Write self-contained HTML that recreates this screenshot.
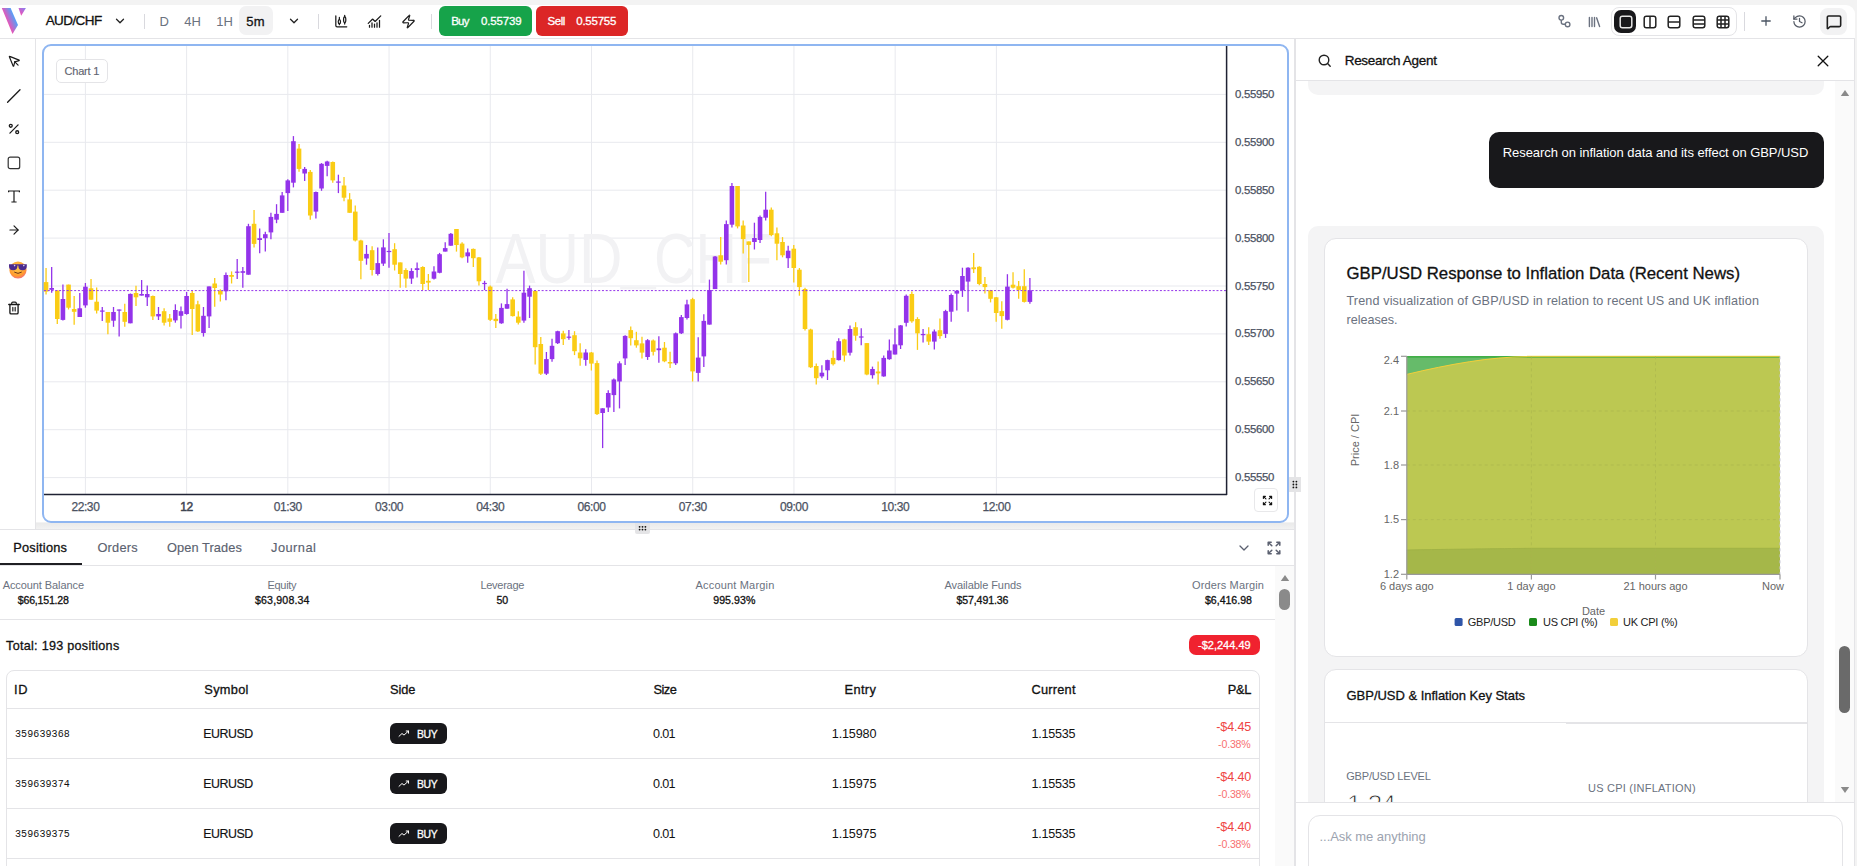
<!DOCTYPE html>
<html><head><meta charset="utf-8">
<style>
*{box-sizing:border-box;margin:0;padding:0}
html,body{width:1857px;height:866px;overflow:hidden;background:#f3f3f3;font-family:"Liberation Sans",sans-serif;color:#111}
.abs{position:absolute}
#tb{position:absolute;left:0;top:5px;width:1855px;height:34px;background:#fff;border-bottom:1px solid #e4e4e7;border-top-right-radius:9px}
.t{position:absolute;white-space:nowrap;line-height:1}
.sb{-webkit-text-stroke:0.3px currentColor}
.sb2{-webkit-text-stroke:0.15px currentColor}
.lt{-webkit-text-stroke:0.9px #fff}
.sep{position:absolute;width:1px;background:#d9d9de}
svg{position:absolute;overflow:visible}
.pl{font-family:"Liberation Sans",sans-serif;font-size:11.4px;fill:#4b5262;stroke:#4b5262;stroke-width:0.25px;letter-spacing:-0.3px}
.tl{font-family:"Liberation Sans",sans-serif;font-size:12px;fill:#4b5262;stroke:#4b5262;stroke-width:0.25px;letter-spacing:-0.4px}
.tl.b{stroke-width:0.5px;fill:#3f4552;stroke:#3f4552}
#side{position:absolute;left:0;top:39px;width:36px;height:490px;background:#fff;border-right:1px solid #e4e4e7}
#main{position:absolute;left:36px;top:39px;width:1259px;height:483px;background:#fff}
#frame{position:absolute;left:42px;top:44px;width:1247px;height:479px;border:2px solid #8fb6f1;border-radius:9px;background:#fff}
#band{position:absolute;left:36px;top:523px;width:1259px;height:6px;background:linear-gradient(#eaeaea,#f2f2f2)}
#bottom{position:absolute;left:0;top:529px;width:1295px;height:337px;background:#fff;border-top:1px solid #e4e4e7}
#right{position:absolute;left:1294px;top:39px;width:561px;height:827px;background:#fff;border-left:2px solid #e4e4e7;border-right:1px solid #e4e4e7}
</style></head><body>

<div id="tb"></div>
<div id="side"></div>
<div id="main"></div>
<div id="frame"></div>
<div id="band"></div>
<div id="bottom"></div>
<div id="right"></div>

<!-- toolbar -->
<svg width="26" height="30" style="left:0;top:4px" viewBox="0 4 26 30">
<defs>
<linearGradient id="lg1" gradientUnits="userSpaceOnUse" x1="7" y1="22.5" x2="15" y2="19"><stop offset="0" stop-color="#f44fb2"/><stop offset="1" stop-color="#5a9ef6"/></linearGradient>
<linearGradient id="lg2" gradientUnits="userSpaceOnUse" x1="20" y1="14" x2="25" y2="8"><stop offset="0" stop-color="#ee4fb8"/><stop offset="1" stop-color="#8a80f0"/></linearGradient>
</defs>
<polygon points="1.8,8 10.6,8 18,25 12.5,34" fill="url(#lg1)"/>
<polygon points="18.5,8 25.9,8 21.2,15.7" fill="url(#lg2)"/>
</svg>
<svg width="14" height="14" style="left:113px;top:14px" viewBox="0 0 24 24" fill="none" stroke="#222" stroke-width="2.2" stroke-linecap="round" stroke-linejoin="round"><path d="m6 9 6 6 6-6"/></svg>
<div class="sep" style="left:144px;top:14px;height:15px"></div>
<div class="abs" style="left:239px;top:6px;width:34px;height:29px;background:#f2f2f3;border-radius:7px"></div>
<svg width="14" height="14" style="left:287px;top:14px" viewBox="0 0 24 24" fill="none" stroke="#222" stroke-width="2.2" stroke-linecap="round" stroke-linejoin="round"><path d="m6 9 6 6 6-6"/></svg>
<div class="sep" style="left:318px;top:14px;height:15px"></div>
<svg width="15" height="15" style="left:333px;top:14px" viewBox="0 0 24 24" fill="none" stroke="#1a1a1a" stroke-width="2" stroke-linecap="round" stroke-linejoin="round"><path d="M4.5 3v15.5a2 2 0 0 0 2 2H22"/><path d="M10.2 5.4v3.4M10.2 15.6v1.4M18.7 2.1v2.4M18.7 13.8v2.2"/><ellipse cx="10.2" cy="12.2" rx="1.8" ry="3.3"/><ellipse cx="18.7" cy="9.1" rx="1.8" ry="4.5"/></svg>
<svg width="15" height="15" style="left:367px;top:14px" viewBox="0 0 24 24" fill="none" stroke="#1a1a1a" stroke-width="2" stroke-linecap="round" stroke-linejoin="round"><path d="M12 16v5M16 14v7M20 10v11M4 18v3M8 14v7"/><path d="m22 3-8.646 8.646a.5.5 0 0 1-.708 0L9.354 8.354a.5.5 0 0 0-.707 0L2 15"/></svg>
<svg width="15" height="15" style="left:401px;top:14px" viewBox="0 0 24 24" fill="none" stroke="#1a1a1a" stroke-width="2" stroke-linecap="round" stroke-linejoin="round"><path d="M4 14a1 1 0 0 1-.78-1.63l9.9-10.2a.5.5 0 0 1 .86.46l-1.92 6.02A1 1 0 0 0 13 10h7a1 1 0 0 1 .78 1.63l-9.9 10.2a.5.5 0 0 1-.86-.46l1.92-6.02A1 1 0 0 0 11 14z"/></svg>
<div class="sep" style="left:431px;top:14px;height:15px"></div>
<div class="abs" style="left:439px;top:6px;width:93px;height:30px;background:#16a34a;border-radius:6px"></div>
<div class="abs" style="left:536px;top:6px;width:92px;height:30px;background:#dc2626;border-radius:6px"></div>

<!-- right toolbar -->
<svg width="14" height="14" style="left:1557px;top:14px" viewBox="0 0 14 14" fill="none" stroke="#6b7280" stroke-width="1.4"><circle cx="4.3" cy="3.8" r="2.3"/><circle cx="10.6" cy="10.4" r="2.3"/><path d="M4.3 6.1v2.2a2 2 0 0 0 2 2h2"/></svg>
<svg width="14" height="14" style="left:1587px;top:14px" viewBox="0 0 14 14" fill="none" stroke="#6b7280" stroke-width="1.4" stroke-linecap="round"><path d="M2.4 3.5v9M5 3.5v9M7.5 3.5v9M9.6 3.8l3 8.7"/></svg>
<div class="abs" style="left:1611px;top:7px;width:126px;height:29px;border:1px solid #e4e4e7;border-radius:8px"></div>
<div class="abs" style="left:1614px;top:10px;width:22px;height:23px;background:#18181b;border-radius:7px"></div>
<svg width="14" height="14" style="left:1618.5px;top:14.5px" viewBox="0 0 14 14" fill="none" stroke="#e5e5e5" stroke-width="1.5"><rect x="1.2" y="1.2" width="11.6" height="11.6" rx="2.2"/></svg>
<svg width="14" height="14" style="left:1642.5px;top:14.5px" viewBox="0 0 14 14" fill="none" stroke="#222" stroke-width="1.5"><rect x="1.2" y="1.2" width="11.6" height="11.6" rx="2.2"/><path d="M7 1.2v11.6"/></svg>
<svg width="14" height="14" style="left:1666.5px;top:14.5px" viewBox="0 0 14 14" fill="none" stroke="#222" stroke-width="1.5"><rect x="1.2" y="1.2" width="11.6" height="11.6" rx="2.2"/><path d="M1.2 7h11.6"/></svg>
<svg width="14" height="14" style="left:1691.5px;top:14.5px" viewBox="0 0 14 14" fill="none" stroke="#222" stroke-width="1.5"><rect x="1.2" y="1.2" width="11.6" height="11.6" rx="2.2"/><path d="M1.2 5h11.6M1.2 9h11.6"/></svg>
<svg width="14" height="14" style="left:1715.5px;top:14.5px" viewBox="0 0 14 14" fill="none" stroke="#222" stroke-width="1.5"><rect x="1.2" y="1.2" width="11.6" height="11.6" rx="2.2"/><path d="M1.2 5h11.6M1.2 9h11.6M5 1.2v11.6M9 1.2v11.6"/></svg>
<div class="sep" style="left:1744px;top:12px;height:19px"></div>
<svg width="12" height="12" style="left:1759.5px;top:15.3px" viewBox="0 0 12 12" fill="none" stroke="#4b5563" stroke-width="1.3"><path d="M6 1.3v9.4M1.3 6h9.4"/></svg>
<svg width="15" height="15" style="left:1791.5px;top:13.8px" viewBox="0 0 24 24" fill="none" stroke="#555b66" stroke-width="2" stroke-linecap="round" stroke-linejoin="round"><path d="M3 12a9 9 0 1 0 9-9 9.75 9.75 0 0 0-6.74 2.74L3 8"/><path d="M3 3v5h5"/><path d="M12 7v5l4 2"/></svg>
<div class="abs" style="left:1820px;top:8px;width:27px;height:27px;background:#f2f2f3;border-radius:8px"></div>
<svg width="16" height="16" style="left:1825.5px;top:13.5px" viewBox="0 0 24 24" fill="none" stroke="#1f1f1f" stroke-width="2.4" stroke-linecap="round" stroke-linejoin="round"><path d="M22 17a2 2 0 0 1-2 2H6.828a2 2 0 0 0-1.414.586l-2.202 2.202A.71.71 0 0 1 2 21.286V5a2 2 0 0 1 2-2h16a2 2 0 0 1 2 2z"/></svg>

<!-- left tools -->
<svg width="14" height="14" style="left:7px;top:54px" viewBox="0 0 24 24" fill="none" stroke="#1a1a1a" stroke-width="2" stroke-linecap="round" stroke-linejoin="round"><path d="M4.037 4.688a.495.495 0 0 1 .651-.651l16 6.5a.5.5 0 0 1-.063.947l-6.124 1.58a2 2 0 0 0-1.438 1.435l-1.579 6.126a.5.5 0 0 1-.947.063z"/><path d="m13 13 6 6"/></svg>
<svg width="14" height="14" style="left:7px;top:88.5px" viewBox="0 0 14 14" fill="none" stroke="#1a1a1a" stroke-width="1.3" stroke-linecap="round"><path d="M0.6 13.2 13 0.8"/></svg>
<svg width="14" height="14" style="left:6.5px;top:121.5px" viewBox="0 0 24 24" fill="none" stroke="#1a1a1a" stroke-width="2.2" stroke-linecap="round" stroke-linejoin="round"><path d="M19 5 5 19"/><circle cx="6.5" cy="6.5" r="2.5"/><circle cx="17.5" cy="17.5" r="2.5"/></svg>
<svg width="14" height="14" style="left:6.5px;top:155.5px" viewBox="0 0 14 14" fill="none" stroke="#333" stroke-width="1.2"><rect x="1.2" y="1.2" width="11.5" height="11.5" rx="2"/></svg>
<svg width="14" height="14" style="left:6.5px;top:189px" viewBox="0 0 14 14" fill="none" stroke="#1a1a1a" stroke-width="1.2" stroke-linecap="square"><path d="M1.6 2.6V2h10.8v0.6M7 2v11M5 13h4"/></svg>
<svg width="14" height="14" style="left:6.5px;top:223px" viewBox="0 0 24 24" fill="none" stroke="#1a1a1a" stroke-width="2" stroke-linecap="round" stroke-linejoin="round"><path d="M5 12h14"/><path d="m12 5 7 7-7 7"/></svg>
<svg width="20" height="18" style="left:8px;top:261px" viewBox="0 0 20 18">
<defs><radialGradient id="emg" cx="0.45" cy="0.35" r="0.7"><stop offset="0" stop-color="#ffcf4a"/><stop offset="0.7" stop-color="#ff9a2e"/><stop offset="1" stop-color="#f0648a"/></radialGradient></defs>
<circle cx="10" cy="9" r="8.6" fill="url(#emg)"/>
<path d="M1 3.2H9.4V5.3C9.4 7.9 7.9 9.3 5.2 9.3S1 7.9 1 5.3Z M10.4 3.2H18.8V5.3C18.8 7.9 17.3 9.3 14.6 9.3S10.4 7.9 10.4 5.3Z M9 3.2h1.8v1.3H9z" fill="#4b2a8f"/><circle cx="6.6" cy="4.6" r="0.8" fill="#fff" opacity="0.8"/><circle cx="15.8" cy="4.6" r="0.8" fill="#fff" opacity="0.8"/>
<path d="M6.6 11.3q3.4 2.4 6.8 0" stroke="#6b3a1a" stroke-width="1" fill="none" stroke-linecap="round"/>
</svg>
<svg width="14" height="14" style="left:6.5px;top:301px" viewBox="0 0 24 24" fill="none" stroke="#1a1a1a" stroke-width="2" stroke-linecap="round" stroke-linejoin="round"><path d="M3 6h18" stroke-width="2.3"/><path d="M19 6v14c0 1-1 2-2 2H7c-1 0-2-1-2-2V6" stroke-width="2.3"/><path d="M8 6V4c0-1 1-2 2-2h4c1 0 2 1 2 2v2"/><path d="M10 11v6M14 11v6"/></svg>

<!-- main chart svg -->
<svg width="1857" height="866" style="left:0;top:0" viewBox="0 0 1857 866">
<line x1="85.40" y1="46" x2="85.40" y2="494" stroke="#e8e9ee" stroke-width="1"/>
<line x1="186.62" y1="46" x2="186.62" y2="494" stroke="#e8e9ee" stroke-width="1"/>
<line x1="287.84" y1="46" x2="287.84" y2="494" stroke="#e8e9ee" stroke-width="1"/>
<line x1="389.06" y1="46" x2="389.06" y2="494" stroke="#e8e9ee" stroke-width="1"/>
<line x1="490.28" y1="46" x2="490.28" y2="494" stroke="#e8e9ee" stroke-width="1"/>
<line x1="591.50" y1="46" x2="591.50" y2="494" stroke="#e8e9ee" stroke-width="1"/>
<line x1="692.72" y1="46" x2="692.72" y2="494" stroke="#e8e9ee" stroke-width="1"/>
<line x1="793.94" y1="46" x2="793.94" y2="494" stroke="#e8e9ee" stroke-width="1"/>
<line x1="895.16" y1="46" x2="895.16" y2="494" stroke="#e8e9ee" stroke-width="1"/>
<line x1="996.38" y1="46" x2="996.38" y2="494" stroke="#e8e9ee" stroke-width="1"/>
<line x1="44" y1="94.40" x2="1226" y2="94.40" stroke="#e8e9ee" stroke-width="1"/>
<line x1="44" y1="142.30" x2="1226" y2="142.30" stroke="#e8e9ee" stroke-width="1"/>
<line x1="44" y1="190.20" x2="1226" y2="190.20" stroke="#e8e9ee" stroke-width="1"/>
<line x1="44" y1="238.10" x2="1226" y2="238.10" stroke="#e8e9ee" stroke-width="1"/>
<line x1="44" y1="286.00" x2="1226" y2="286.00" stroke="#e8e9ee" stroke-width="1"/>
<line x1="44" y1="333.90" x2="1226" y2="333.90" stroke="#e8e9ee" stroke-width="1"/>
<line x1="44" y1="381.80" x2="1226" y2="381.80" stroke="#e8e9ee" stroke-width="1"/>
<line x1="44" y1="429.70" x2="1226" y2="429.70" stroke="#e8e9ee" stroke-width="1"/>
<line x1="44" y1="477.60" x2="1226" y2="477.60" stroke="#e8e9ee" stroke-width="1"/>
<g fill="#f2f2f4" font-family="Liberation Sans" font-size="70.5"><text x="495.5" y="283.4" textLength="127" lengthAdjust="spacingAndGlyphs">AUD</text><text x="654" y="283.4" textLength="118" lengthAdjust="spacingAndGlyphs">CHF</text><rect x="620.2" y="286.8" width="36" height="2.5"/></g>
<line x1="46.05" y1="267.9" x2="46.05" y2="294.5" stroke="#facc15" stroke-width="1.3"/>
<rect x="43.75" y="282.1" width="4.6" height="9.50" fill="#facc15"/>
<line x1="51.67" y1="267" x2="51.67" y2="292.7" stroke="#9333ea" stroke-width="1.3"/>
<rect x="49.37" y="288" width="4.6" height="1.80" fill="#9333ea"/>
<line x1="57.29" y1="290.4" x2="57.29" y2="324" stroke="#facc15" stroke-width="1.3"/>
<rect x="54.99" y="290.4" width="4.6" height="28.60" fill="#facc15"/>
<line x1="62.92" y1="284.6" x2="62.92" y2="320.4" stroke="#9333ea" stroke-width="1.3"/>
<rect x="60.62" y="299" width="4.6" height="20.90" fill="#9333ea"/>
<line x1="68.54" y1="284.6" x2="68.54" y2="309.5" stroke="#facc15" stroke-width="1.3"/>
<rect x="66.24" y="284.6" width="4.6" height="23.10" fill="#facc15"/>
<line x1="74.16" y1="296" x2="74.16" y2="324.8" stroke="#facc15" stroke-width="1.3"/>
<rect x="71.86" y="309" width="4.6" height="2.80" fill="#facc15"/>
<line x1="79.78" y1="293" x2="79.78" y2="317" stroke="#9333ea" stroke-width="1.3"/>
<rect x="77.48" y="308.3" width="4.6" height="8.70" fill="#9333ea"/>
<line x1="85.40" y1="283" x2="85.40" y2="307.7" stroke="#9333ea" stroke-width="1.3"/>
<rect x="83.10" y="286.7" width="4.6" height="18.70" fill="#9333ea"/>
<line x1="91.03" y1="279" x2="91.03" y2="299.7" stroke="#facc15" stroke-width="1.3"/>
<rect x="88.73" y="288.3" width="4.6" height="11.40" fill="#facc15"/>
<line x1="96.65" y1="287.5" x2="96.65" y2="313.5" stroke="#facc15" stroke-width="1.3"/>
<rect x="94.35" y="301.7" width="4.6" height="8.90" fill="#facc15"/>
<line x1="102.27" y1="307" x2="102.27" y2="321" stroke="#9333ea" stroke-width="1.3"/>
<rect x="99.97" y="310.5" width="4.6" height="1.20" fill="#9333ea"/>
<line x1="107.89" y1="312" x2="107.89" y2="334.3" stroke="#facc15" stroke-width="1.3"/>
<rect x="105.59" y="312" width="4.6" height="10.70" fill="#facc15"/>
<line x1="113.51" y1="307" x2="113.51" y2="326.8" stroke="#9333ea" stroke-width="1.3"/>
<rect x="111.21" y="312" width="4.6" height="8.70" fill="#9333ea"/>
<line x1="119.14" y1="309.5" x2="119.14" y2="336.6" stroke="#9333ea" stroke-width="1.3"/>
<rect x="116.84" y="309.5" width="4.6" height="1.20" fill="#9333ea"/>
<line x1="124.76" y1="303.7" x2="124.76" y2="326.8" stroke="#facc15" stroke-width="1.3"/>
<rect x="122.46" y="312" width="4.6" height="9.80" fill="#facc15"/>
<line x1="130.38" y1="293.5" x2="130.38" y2="323.3" stroke="#9333ea" stroke-width="1.3"/>
<rect x="128.08" y="293.9" width="4.6" height="29.40" fill="#9333ea"/>
<line x1="136.00" y1="285.8" x2="136.00" y2="306" stroke="#facc15" stroke-width="1.3"/>
<rect x="133.70" y="293" width="4.6" height="4.30" fill="#facc15"/>
<line x1="141.62" y1="280" x2="141.62" y2="295.6" stroke="#9333ea" stroke-width="1.3"/>
<rect x="139.32" y="294" width="4.6" height="1.60" fill="#9333ea"/>
<line x1="147.25" y1="285.6" x2="147.25" y2="306" stroke="#9333ea" stroke-width="1.3"/>
<rect x="144.95" y="294" width="4.6" height="3.30" fill="#9333ea"/>
<line x1="152.87" y1="295.6" x2="152.87" y2="319.9" stroke="#facc15" stroke-width="1.3"/>
<rect x="150.57" y="296" width="4.6" height="20.40" fill="#facc15"/>
<line x1="158.49" y1="307" x2="158.49" y2="320" stroke="#9333ea" stroke-width="1.3"/>
<rect x="156.19" y="314" width="4.6" height="2.40" fill="#9333ea"/>
<line x1="164.11" y1="308.3" x2="164.11" y2="325.6" stroke="#facc15" stroke-width="1.3"/>
<rect x="161.81" y="311.2" width="4.6" height="11.50" fill="#facc15"/>
<line x1="169.73" y1="314" x2="169.73" y2="326.8" stroke="#facc15" stroke-width="1.3"/>
<rect x="167.43" y="318.4" width="4.6" height="3.40" fill="#facc15"/>
<line x1="175.36" y1="304.3" x2="175.36" y2="322.7" stroke="#9333ea" stroke-width="1.3"/>
<rect x="173.06" y="310" width="4.6" height="10.40" fill="#9333ea"/>
<line x1="180.98" y1="306.4" x2="180.98" y2="328.5" stroke="#9333ea" stroke-width="1.3"/>
<rect x="178.68" y="311.2" width="4.6" height="4.60" fill="#9333ea"/>
<line x1="186.60" y1="292" x2="186.60" y2="314.7" stroke="#9333ea" stroke-width="1.3"/>
<rect x="184.30" y="296" width="4.6" height="18.00" fill="#9333ea"/>
<line x1="192.22" y1="291" x2="192.22" y2="334.9" stroke="#facc15" stroke-width="1.3"/>
<rect x="189.92" y="293" width="4.6" height="16.00" fill="#facc15"/>
<line x1="197.84" y1="300.8" x2="197.84" y2="332" stroke="#facc15" stroke-width="1.3"/>
<rect x="195.54" y="304.3" width="4.6" height="27.10" fill="#facc15"/>
<line x1="203.47" y1="307" x2="203.47" y2="336.6" stroke="#9333ea" stroke-width="1.3"/>
<rect x="201.17" y="315.8" width="4.6" height="17.20" fill="#9333ea"/>
<line x1="209.09" y1="286.4" x2="209.09" y2="328" stroke="#9333ea" stroke-width="1.3"/>
<rect x="206.79" y="286.4" width="4.6" height="30.00" fill="#9333ea"/>
<line x1="214.71" y1="278" x2="214.71" y2="306.8" stroke="#facc15" stroke-width="1.3"/>
<rect x="212.41" y="283.5" width="4.6" height="4.50" fill="#facc15"/>
<line x1="220.33" y1="289.3" x2="220.33" y2="301.4" stroke="#facc15" stroke-width="1.3"/>
<rect x="218.03" y="291" width="4.6" height="3.50" fill="#facc15"/>
<line x1="225.95" y1="272.5" x2="225.95" y2="300.2" stroke="#9333ea" stroke-width="1.3"/>
<rect x="223.65" y="275" width="4.6" height="16.30" fill="#9333ea"/>
<line x1="231.58" y1="271.4" x2="231.58" y2="283.5" stroke="#facc15" stroke-width="1.3"/>
<rect x="229.28" y="275" width="4.6" height="1.80" fill="#facc15"/>
<line x1="237.20" y1="259" x2="237.20" y2="278.9" stroke="#9333ea" stroke-width="1.3"/>
<rect x="234.90" y="271.6" width="4.6" height="1.20" fill="#9333ea"/>
<line x1="242.82" y1="267" x2="242.82" y2="287.8" stroke="#9333ea" stroke-width="1.3"/>
<rect x="240.52" y="271.2" width="4.6" height="1.60" fill="#9333ea"/>
<line x1="248.44" y1="223.8" x2="248.44" y2="274.7" stroke="#9333ea" stroke-width="1.3"/>
<rect x="246.14" y="226.2" width="4.6" height="48.50" fill="#9333ea"/>
<line x1="254.06" y1="210" x2="254.06" y2="247.4" stroke="#facc15" stroke-width="1.3"/>
<rect x="251.76" y="223.8" width="4.6" height="20.10" fill="#facc15"/>
<line x1="259.69" y1="228.5" x2="259.69" y2="253.2" stroke="#9333ea" stroke-width="1.3"/>
<rect x="257.39" y="238.2" width="4.6" height="1.80" fill="#9333ea"/>
<line x1="265.31" y1="231.7" x2="265.31" y2="251.6" stroke="#9333ea" stroke-width="1.3"/>
<rect x="263.01" y="234.2" width="4.6" height="4.00" fill="#9333ea"/>
<line x1="270.93" y1="212.8" x2="270.93" y2="239.3" stroke="#9333ea" stroke-width="1.3"/>
<rect x="268.63" y="216.9" width="4.6" height="15.50" fill="#9333ea"/>
<line x1="276.55" y1="204.2" x2="276.55" y2="223.2" stroke="#9333ea" stroke-width="1.3"/>
<rect x="274.25" y="213.9" width="4.6" height="5.80" fill="#9333ea"/>
<line x1="282.17" y1="192" x2="282.17" y2="212.8" stroke="#9333ea" stroke-width="1.3"/>
<rect x="279.87" y="195.4" width="4.6" height="17.40" fill="#9333ea"/>
<line x1="287.80" y1="179.3" x2="287.80" y2="210.9" stroke="#9333ea" stroke-width="1.3"/>
<rect x="285.50" y="180.4" width="4.6" height="12.70" fill="#9333ea"/>
<line x1="293.42" y1="136.1" x2="293.42" y2="187.4" stroke="#9333ea" stroke-width="1.3"/>
<rect x="291.12" y="141.2" width="4.6" height="41.50" fill="#9333ea"/>
<line x1="299.04" y1="143.9" x2="299.04" y2="171.7" stroke="#facc15" stroke-width="1.3"/>
<rect x="296.74" y="148.6" width="4.6" height="20.30" fill="#facc15"/>
<line x1="304.66" y1="167" x2="304.66" y2="180.9" stroke="#9333ea" stroke-width="1.3"/>
<rect x="302.36" y="168.9" width="4.6" height="4.60" fill="#9333ea"/>
<line x1="310.28" y1="170" x2="310.28" y2="219.7" stroke="#facc15" stroke-width="1.3"/>
<rect x="307.98" y="171.9" width="4.6" height="43.60" fill="#facc15"/>
<line x1="315.91" y1="191.5" x2="315.91" y2="218.5" stroke="#9333ea" stroke-width="1.3"/>
<rect x="313.61" y="192" width="4.6" height="19.60" fill="#9333ea"/>
<line x1="321.53" y1="163.1" x2="321.53" y2="190.8" stroke="#9333ea" stroke-width="1.3"/>
<rect x="319.23" y="163.8" width="4.6" height="24.70" fill="#9333ea"/>
<line x1="327.15" y1="160.8" x2="327.15" y2="176.3" stroke="#9333ea" stroke-width="1.3"/>
<rect x="324.85" y="161.5" width="4.6" height="4.40" fill="#9333ea"/>
<line x1="332.77" y1="161.5" x2="332.77" y2="182.7" stroke="#facc15" stroke-width="1.3"/>
<rect x="330.47" y="162" width="4.6" height="18.40" fill="#facc15"/>
<line x1="338.39" y1="174.7" x2="338.39" y2="193.1" stroke="#9333ea" stroke-width="1.3"/>
<rect x="336.09" y="181.5" width="4.6" height="1.20" fill="#9333ea"/>
<line x1="344.02" y1="177" x2="344.02" y2="201.2" stroke="#facc15" stroke-width="1.3"/>
<rect x="341.72" y="185.5" width="4.6" height="12.20" fill="#facc15"/>
<line x1="349.64" y1="193.1" x2="349.64" y2="212.8" stroke="#facc15" stroke-width="1.3"/>
<rect x="347.34" y="199.4" width="4.6" height="13.40" fill="#facc15"/>
<line x1="355.26" y1="205.4" x2="355.26" y2="241.6" stroke="#facc15" stroke-width="1.3"/>
<rect x="352.96" y="211.6" width="4.6" height="28.90" fill="#facc15"/>
<line x1="360.88" y1="239.8" x2="360.88" y2="279.3" stroke="#facc15" stroke-width="1.3"/>
<rect x="358.58" y="240.5" width="4.6" height="20.30" fill="#facc15"/>
<line x1="366.50" y1="245" x2="366.50" y2="264.7" stroke="#9333ea" stroke-width="1.3"/>
<rect x="364.20" y="253.9" width="4.6" height="4.60" fill="#9333ea"/>
<line x1="372.13" y1="246.2" x2="372.13" y2="275.6" stroke="#facc15" stroke-width="1.3"/>
<rect x="369.83" y="250.2" width="4.6" height="19.80" fill="#facc15"/>
<line x1="377.75" y1="247.4" x2="377.75" y2="275.6" stroke="#9333ea" stroke-width="1.3"/>
<rect x="375.45" y="263.1" width="4.6" height="10.90" fill="#9333ea"/>
<line x1="383.37" y1="239.3" x2="383.37" y2="265.9" stroke="#9333ea" stroke-width="1.3"/>
<rect x="381.07" y="247.4" width="4.6" height="16.20" fill="#9333ea"/>
<line x1="388.99" y1="232.9" x2="388.99" y2="267.7" stroke="#9333ea" stroke-width="1.3"/>
<rect x="386.69" y="250.9" width="4.6" height="1.20" fill="#9333ea"/>
<line x1="394.61" y1="243.2" x2="394.61" y2="270.5" stroke="#facc15" stroke-width="1.3"/>
<rect x="392.31" y="249.2" width="4.6" height="15.50" fill="#facc15"/>
<line x1="400.24" y1="262.4" x2="400.24" y2="287.8" stroke="#facc15" stroke-width="1.3"/>
<rect x="397.94" y="262.4" width="4.6" height="11.60" fill="#facc15"/>
<line x1="405.86" y1="268.2" x2="405.86" y2="287.8" stroke="#facc15" stroke-width="1.3"/>
<rect x="403.56" y="270" width="4.6" height="8.60" fill="#facc15"/>
<line x1="411.48" y1="268.2" x2="411.48" y2="283.9" stroke="#9333ea" stroke-width="1.3"/>
<rect x="409.18" y="271" width="4.6" height="7.60" fill="#9333ea"/>
<line x1="417.10" y1="262.4" x2="417.10" y2="277.4" stroke="#9333ea" stroke-width="1.3"/>
<rect x="414.80" y="268.2" width="4.6" height="1.80" fill="#9333ea"/>
<line x1="422.72" y1="266.2" x2="422.72" y2="290.1" stroke="#facc15" stroke-width="1.3"/>
<rect x="420.42" y="267" width="4.6" height="17.00" fill="#facc15"/>
<line x1="428.35" y1="274.1" x2="428.35" y2="290.1" stroke="#facc15" stroke-width="1.3"/>
<rect x="426.05" y="280.8" width="4.6" height="1.80" fill="#facc15"/>
<line x1="433.97" y1="266.2" x2="433.97" y2="279.4" stroke="#9333ea" stroke-width="1.3"/>
<rect x="431.67" y="271.5" width="4.6" height="7.20" fill="#9333ea"/>
<line x1="439.59" y1="252.9" x2="439.59" y2="273.3" stroke="#9333ea" stroke-width="1.3"/>
<rect x="437.29" y="254.2" width="4.6" height="18.60" fill="#9333ea"/>
<line x1="445.21" y1="242.3" x2="445.21" y2="251.6" stroke="#9333ea" stroke-width="1.3"/>
<rect x="442.91" y="248.1" width="4.6" height="3.50" fill="#9333ea"/>
<line x1="450.83" y1="233" x2="450.83" y2="245.7" stroke="#9333ea" stroke-width="1.3"/>
<rect x="448.53" y="233.8" width="4.6" height="11.90" fill="#9333ea"/>
<line x1="456.46" y1="229" x2="456.46" y2="251.6" stroke="#facc15" stroke-width="1.3"/>
<rect x="454.16" y="229" width="4.6" height="16.00" fill="#facc15"/>
<line x1="462.08" y1="242.3" x2="462.08" y2="258.2" stroke="#facc15" stroke-width="1.3"/>
<rect x="459.78" y="243.6" width="4.6" height="13.80" fill="#facc15"/>
<line x1="467.70" y1="248.4" x2="467.70" y2="262.7" stroke="#9333ea" stroke-width="1.3"/>
<rect x="465.40" y="252.4" width="4.6" height="3.90" fill="#9333ea"/>
<line x1="473.32" y1="248.4" x2="473.32" y2="267" stroke="#facc15" stroke-width="1.3"/>
<rect x="471.02" y="248.9" width="4.6" height="9.30" fill="#facc15"/>
<line x1="478.94" y1="256.9" x2="478.94" y2="285.6" stroke="#facc15" stroke-width="1.3"/>
<rect x="476.64" y="257.4" width="4.6" height="23.90" fill="#facc15"/>
<line x1="484.57" y1="280.8" x2="484.57" y2="290.1" stroke="#9333ea" stroke-width="1.3"/>
<rect x="482.27" y="282.9" width="4.6" height="1.20" fill="#9333ea"/>
<line x1="490.19" y1="285.6" x2="490.19" y2="321.1" stroke="#facc15" stroke-width="1.3"/>
<rect x="487.89" y="286.6" width="4.6" height="33.20" fill="#facc15"/>
<line x1="495.81" y1="314" x2="495.81" y2="328" stroke="#facc15" stroke-width="1.3"/>
<rect x="493.51" y="318.8" width="4.6" height="2.30" fill="#facc15"/>
<line x1="501.43" y1="303.4" x2="501.43" y2="323.8" stroke="#9333ea" stroke-width="1.3"/>
<rect x="499.13" y="307.9" width="4.6" height="15.40" fill="#9333ea"/>
<line x1="507.05" y1="288.7" x2="507.05" y2="308.7" stroke="#9333ea" stroke-width="1.3"/>
<rect x="504.75" y="304.1" width="4.6" height="4.60" fill="#9333ea"/>
<line x1="512.68" y1="297.2" x2="512.68" y2="316.6" stroke="#facc15" stroke-width="1.3"/>
<rect x="510.38" y="299.4" width="4.6" height="16.70" fill="#facc15"/>
<line x1="518.30" y1="311.3" x2="518.30" y2="324.6" stroke="#facc15" stroke-width="1.3"/>
<rect x="516.00" y="316.6" width="4.6" height="6.10" fill="#facc15"/>
<line x1="523.92" y1="270.7" x2="523.92" y2="322.7" stroke="#9333ea" stroke-width="1.3"/>
<rect x="521.62" y="292.7" width="4.6" height="27.90" fill="#9333ea"/>
<line x1="529.54" y1="285.6" x2="529.54" y2="318" stroke="#9333ea" stroke-width="1.3"/>
<rect x="527.24" y="288.2" width="4.6" height="8.50" fill="#9333ea"/>
<line x1="535.16" y1="290.1" x2="535.16" y2="364.4" stroke="#facc15" stroke-width="1.3"/>
<rect x="532.86" y="290.9" width="4.6" height="56.30" fill="#facc15"/>
<line x1="540.79" y1="337.1" x2="540.79" y2="375" stroke="#facc15" stroke-width="1.3"/>
<rect x="538.49" y="344" width="4.6" height="29.70" fill="#facc15"/>
<line x1="546.41" y1="352" x2="546.41" y2="375" stroke="#9333ea" stroke-width="1.3"/>
<rect x="544.11" y="359.1" width="4.6" height="14.60" fill="#9333ea"/>
<line x1="552.03" y1="338.7" x2="552.03" y2="361.8" stroke="#9333ea" stroke-width="1.3"/>
<rect x="549.73" y="345.8" width="4.6" height="13.30" fill="#9333ea"/>
<line x1="557.65" y1="330.7" x2="557.65" y2="344" stroke="#9333ea" stroke-width="1.3"/>
<rect x="555.35" y="331.2" width="4.6" height="12.00" fill="#9333ea"/>
<line x1="563.27" y1="330.7" x2="563.27" y2="345" stroke="#facc15" stroke-width="1.3"/>
<rect x="560.97" y="333.4" width="4.6" height="5.80" fill="#facc15"/>
<line x1="568.90" y1="329.9" x2="568.90" y2="339.7" stroke="#9333ea" stroke-width="1.3"/>
<rect x="566.60" y="336.6" width="4.6" height="1.20" fill="#9333ea"/>
<line x1="574.52" y1="331.2" x2="574.52" y2="355.1" stroke="#facc15" stroke-width="1.3"/>
<rect x="572.22" y="335.2" width="4.6" height="16.00" fill="#facc15"/>
<line x1="580.14" y1="343.2" x2="580.14" y2="365.8" stroke="#facc15" stroke-width="1.3"/>
<rect x="577.84" y="352.5" width="4.6" height="5.80" fill="#facc15"/>
<line x1="585.76" y1="349.3" x2="585.76" y2="365.8" stroke="#9333ea" stroke-width="1.3"/>
<rect x="583.46" y="352.5" width="4.6" height="7.40" fill="#9333ea"/>
<line x1="591.38" y1="352" x2="591.38" y2="370.5" stroke="#facc15" stroke-width="1.3"/>
<rect x="589.08" y="352.5" width="4.6" height="11.10" fill="#facc15"/>
<line x1="597.01" y1="360.5" x2="597.01" y2="414.9" stroke="#facc15" stroke-width="1.3"/>
<rect x="594.71" y="363.1" width="4.6" height="51.00" fill="#facc15"/>
<line x1="602.63" y1="408.3" x2="602.63" y2="448.1" stroke="#9333ea" stroke-width="1.3"/>
<rect x="600.33" y="408.3" width="4.6" height="4.70" fill="#9333ea"/>
<line x1="608.25" y1="390.2" x2="608.25" y2="411.9" stroke="#9333ea" stroke-width="1.3"/>
<rect x="605.95" y="393" width="4.6" height="14.50" fill="#9333ea"/>
<line x1="613.87" y1="378.6" x2="613.87" y2="411.9" stroke="#9333ea" stroke-width="1.3"/>
<rect x="611.57" y="379.5" width="4.6" height="15.60" fill="#9333ea"/>
<line x1="619.49" y1="361.3" x2="619.49" y2="408.4" stroke="#9333ea" stroke-width="1.3"/>
<rect x="617.19" y="363.3" width="4.6" height="18.20" fill="#9333ea"/>
<line x1="625.12" y1="335.3" x2="625.12" y2="365" stroke="#9333ea" stroke-width="1.3"/>
<rect x="622.82" y="335.9" width="4.6" height="22.50" fill="#9333ea"/>
<line x1="630.74" y1="326.6" x2="630.74" y2="345.4" stroke="#facc15" stroke-width="1.3"/>
<rect x="628.44" y="330.1" width="4.6" height="8.10" fill="#facc15"/>
<line x1="636.36" y1="331.8" x2="636.36" y2="347.7" stroke="#facc15" stroke-width="1.3"/>
<rect x="634.06" y="340.2" width="4.6" height="5.20" fill="#facc15"/>
<line x1="641.98" y1="336.8" x2="641.98" y2="358.4" stroke="#facc15" stroke-width="1.3"/>
<rect x="639.68" y="343.4" width="4.6" height="9.20" fill="#facc15"/>
<line x1="647.60" y1="339.1" x2="647.60" y2="359.9" stroke="#9333ea" stroke-width="1.3"/>
<rect x="645.30" y="340.2" width="4.6" height="16.80" fill="#9333ea"/>
<line x1="653.23" y1="339.6" x2="653.23" y2="355.5" stroke="#facc15" stroke-width="1.3"/>
<rect x="650.93" y="340.5" width="4.6" height="11.30" fill="#facc15"/>
<line x1="658.85" y1="336.2" x2="658.85" y2="362.8" stroke="#9333ea" stroke-width="1.3"/>
<rect x="656.55" y="348.4" width="4.6" height="1.80" fill="#9333ea"/>
<line x1="664.47" y1="342" x2="664.47" y2="362.2" stroke="#facc15" stroke-width="1.3"/>
<rect x="662.17" y="347.7" width="4.6" height="13.60" fill="#facc15"/>
<line x1="670.09" y1="351.8" x2="670.09" y2="368" stroke="#facc15" stroke-width="1.3"/>
<rect x="667.79" y="362" width="4.6" height="1.50" fill="#facc15"/>
<line x1="675.71" y1="332.4" x2="675.71" y2="365" stroke="#9333ea" stroke-width="1.3"/>
<rect x="673.41" y="333.3" width="4.6" height="30.00" fill="#9333ea"/>
<line x1="681.34" y1="315.1" x2="681.34" y2="333.9" stroke="#9333ea" stroke-width="1.3"/>
<rect x="679.04" y="317.1" width="4.6" height="16.20" fill="#9333ea"/>
<line x1="686.96" y1="299.8" x2="686.96" y2="319.4" stroke="#9333ea" stroke-width="1.3"/>
<rect x="684.66" y="304.4" width="4.6" height="13.60" fill="#9333ea"/>
<line x1="692.58" y1="297.8" x2="692.58" y2="381.5" stroke="#facc15" stroke-width="1.3"/>
<rect x="690.28" y="299.2" width="4.6" height="72.20" fill="#facc15"/>
<line x1="698.20" y1="337.3" x2="698.20" y2="381.5" stroke="#9333ea" stroke-width="1.3"/>
<rect x="695.90" y="357.6" width="4.6" height="15.30" fill="#9333ea"/>
<line x1="703.82" y1="314.2" x2="703.82" y2="367.1" stroke="#9333ea" stroke-width="1.3"/>
<rect x="701.52" y="320.9" width="4.6" height="35.50" fill="#9333ea"/>
<line x1="709.45" y1="279.6" x2="709.45" y2="324.6" stroke="#9333ea" stroke-width="1.3"/>
<rect x="707.15" y="290" width="4.6" height="34.60" fill="#9333ea"/>
<line x1="715.07" y1="255.9" x2="715.07" y2="289.1" stroke="#9333ea" stroke-width="1.3"/>
<rect x="712.77" y="256.5" width="4.6" height="32.60" fill="#9333ea"/>
<line x1="720.69" y1="237.1" x2="720.69" y2="264.5" stroke="#facc15" stroke-width="1.3"/>
<rect x="718.39" y="255.3" width="4.6" height="6.40" fill="#facc15"/>
<line x1="726.31" y1="220.6" x2="726.31" y2="264.5" stroke="#9333ea" stroke-width="1.3"/>
<rect x="724.01" y="224.1" width="4.6" height="36.10" fill="#9333ea"/>
<line x1="731.93" y1="183.1" x2="731.93" y2="227.6" stroke="#9333ea" stroke-width="1.3"/>
<rect x="729.63" y="186" width="4.6" height="38.70" fill="#9333ea"/>
<line x1="737.56" y1="186" x2="737.56" y2="228.4" stroke="#facc15" stroke-width="1.3"/>
<rect x="735.26" y="186" width="4.6" height="40.40" fill="#facc15"/>
<line x1="743.18" y1="220.6" x2="743.18" y2="253.6" stroke="#facc15" stroke-width="1.3"/>
<rect x="740.88" y="225.5" width="4.6" height="13.60" fill="#facc15"/>
<line x1="748.80" y1="241.4" x2="748.80" y2="281.9" stroke="#facc15" stroke-width="1.3"/>
<rect x="746.50" y="241.4" width="4.6" height="3.50" fill="#facc15"/>
<line x1="754.42" y1="222.7" x2="754.42" y2="249.5" stroke="#9333ea" stroke-width="1.3"/>
<rect x="752.12" y="238" width="4.6" height="4.00" fill="#9333ea"/>
<line x1="760.04" y1="215.4" x2="760.04" y2="242.9" stroke="#9333ea" stroke-width="1.3"/>
<rect x="757.74" y="216.9" width="4.6" height="23.10" fill="#9333ea"/>
<line x1="765.67" y1="191.8" x2="765.67" y2="220.6" stroke="#9333ea" stroke-width="1.3"/>
<rect x="763.37" y="209.7" width="4.6" height="8.00" fill="#9333ea"/>
<line x1="771.29" y1="207.4" x2="771.29" y2="236.2" stroke="#facc15" stroke-width="1.3"/>
<rect x="768.99" y="209.7" width="4.6" height="25.40" fill="#facc15"/>
<line x1="776.91" y1="227.6" x2="776.91" y2="260.2" stroke="#facc15" stroke-width="1.3"/>
<rect x="774.61" y="233.3" width="4.6" height="10.40" fill="#facc15"/>
<line x1="782.53" y1="237.1" x2="782.53" y2="257.3" stroke="#facc15" stroke-width="1.3"/>
<rect x="780.23" y="242" width="4.6" height="13.30" fill="#facc15"/>
<line x1="788.15" y1="245.8" x2="788.15" y2="268" stroke="#9333ea" stroke-width="1.3"/>
<rect x="785.85" y="250.7" width="4.6" height="7.50" fill="#9333ea"/>
<line x1="793.78" y1="244.9" x2="793.78" y2="282.5" stroke="#facc15" stroke-width="1.3"/>
<rect x="791.48" y="248.7" width="4.6" height="19.30" fill="#facc15"/>
<line x1="799.40" y1="268" x2="799.40" y2="295.7" stroke="#facc15" stroke-width="1.3"/>
<rect x="797.10" y="269.7" width="4.6" height="17.40" fill="#facc15"/>
<line x1="805.02" y1="287.7" x2="805.02" y2="330.5" stroke="#facc15" stroke-width="1.3"/>
<rect x="802.72" y="289" width="4.6" height="40.00" fill="#facc15"/>
<line x1="810.64" y1="328.7" x2="810.64" y2="368" stroke="#facc15" stroke-width="1.3"/>
<rect x="808.34" y="329.5" width="4.6" height="37.80" fill="#facc15"/>
<line x1="816.26" y1="363.4" x2="816.26" y2="384.5" stroke="#facc15" stroke-width="1.3"/>
<rect x="813.96" y="366" width="4.6" height="12.20" fill="#facc15"/>
<line x1="821.89" y1="365.3" x2="821.89" y2="378.2" stroke="#9333ea" stroke-width="1.3"/>
<rect x="819.59" y="372.7" width="4.6" height="3.70" fill="#9333ea"/>
<line x1="827.51" y1="359.7" x2="827.51" y2="380" stroke="#9333ea" stroke-width="1.3"/>
<rect x="825.21" y="360.1" width="4.6" height="10.20" fill="#9333ea"/>
<line x1="833.13" y1="350.5" x2="833.13" y2="365.6" stroke="#facc15" stroke-width="1.3"/>
<rect x="830.83" y="357.9" width="4.6" height="6.30" fill="#facc15"/>
<line x1="838.75" y1="338.3" x2="838.75" y2="360.5" stroke="#9333ea" stroke-width="1.3"/>
<rect x="836.45" y="341.2" width="4.6" height="18.90" fill="#9333ea"/>
<line x1="844.37" y1="338.8" x2="844.37" y2="361.6" stroke="#facc15" stroke-width="1.3"/>
<rect x="842.07" y="339.4" width="4.6" height="16.10" fill="#facc15"/>
<line x1="850.00" y1="325.4" x2="850.00" y2="355.5" stroke="#9333ea" stroke-width="1.3"/>
<rect x="847.70" y="329" width="4.6" height="23.70" fill="#9333ea"/>
<line x1="855.62" y1="322.2" x2="855.62" y2="340.7" stroke="#facc15" stroke-width="1.3"/>
<rect x="853.32" y="327.2" width="4.6" height="8.50" fill="#facc15"/>
<line x1="861.24" y1="328.3" x2="861.24" y2="345.3" stroke="#9333ea" stroke-width="1.3"/>
<rect x="858.94" y="336.4" width="4.6" height="1.20" fill="#9333ea"/>
<line x1="866.86" y1="343.1" x2="866.86" y2="375.2" stroke="#facc15" stroke-width="1.3"/>
<rect x="864.56" y="343.1" width="4.6" height="31.40" fill="#facc15"/>
<line x1="872.48" y1="366.6" x2="872.48" y2="378.6" stroke="#9333ea" stroke-width="1.3"/>
<rect x="870.18" y="369" width="4.6" height="6.20" fill="#9333ea"/>
<line x1="878.11" y1="361.6" x2="878.11" y2="384.5" stroke="#facc15" stroke-width="1.3"/>
<rect x="875.81" y="371.5" width="4.6" height="1.90" fill="#facc15"/>
<line x1="883.73" y1="355.5" x2="883.73" y2="376.7" stroke="#9333ea" stroke-width="1.3"/>
<rect x="881.43" y="357.9" width="4.6" height="18.50" fill="#9333ea"/>
<line x1="889.35" y1="339.4" x2="889.35" y2="359.7" stroke="#9333ea" stroke-width="1.3"/>
<rect x="887.05" y="350.5" width="4.6" height="8.70" fill="#9333ea"/>
<line x1="894.97" y1="328.3" x2="894.97" y2="354.5" stroke="#9333ea" stroke-width="1.3"/>
<rect x="892.67" y="344.4" width="4.6" height="10.10" fill="#9333ea"/>
<line x1="900.59" y1="325" x2="900.59" y2="349" stroke="#9333ea" stroke-width="1.3"/>
<rect x="898.29" y="325.4" width="4.6" height="19.90" fill="#9333ea"/>
<line x1="906.22" y1="294.5" x2="906.22" y2="326.5" stroke="#9333ea" stroke-width="1.3"/>
<rect x="903.92" y="295.8" width="4.6" height="27.00" fill="#9333ea"/>
<line x1="911.84" y1="291.4" x2="911.84" y2="322.8" stroke="#facc15" stroke-width="1.3"/>
<rect x="909.54" y="294" width="4.6" height="27.30" fill="#facc15"/>
<line x1="917.46" y1="317.2" x2="917.46" y2="349.9" stroke="#facc15" stroke-width="1.3"/>
<rect x="915.16" y="319" width="4.6" height="14.30" fill="#facc15"/>
<line x1="923.08" y1="329" x2="923.08" y2="342.5" stroke="#9333ea" stroke-width="1.3"/>
<rect x="920.78" y="334" width="4.6" height="1.20" fill="#9333ea"/>
<line x1="928.70" y1="327.2" x2="928.70" y2="345" stroke="#facc15" stroke-width="1.3"/>
<rect x="926.40" y="334.2" width="4.6" height="7.40" fill="#facc15"/>
<line x1="934.33" y1="329.6" x2="934.33" y2="349.4" stroke="#9333ea" stroke-width="1.3"/>
<rect x="932.03" y="331.5" width="4.6" height="10.10" fill="#9333ea"/>
<line x1="939.95" y1="318.5" x2="939.95" y2="338.8" stroke="#facc15" stroke-width="1.3"/>
<rect x="937.65" y="330.2" width="4.6" height="5.90" fill="#facc15"/>
<line x1="945.57" y1="309.8" x2="945.57" y2="337.9" stroke="#9333ea" stroke-width="1.3"/>
<rect x="943.27" y="311.1" width="4.6" height="22.80" fill="#9333ea"/>
<line x1="951.19" y1="293.6" x2="951.19" y2="321.7" stroke="#9333ea" stroke-width="1.3"/>
<rect x="948.89" y="295" width="4.6" height="16.70" fill="#9333ea"/>
<line x1="956.81" y1="290.3" x2="956.81" y2="310.6" stroke="#9333ea" stroke-width="1.3"/>
<rect x="954.51" y="290.8" width="4.6" height="2.80" fill="#9333ea"/>
<line x1="962.44" y1="267.7" x2="962.44" y2="296.9" stroke="#9333ea" stroke-width="1.3"/>
<rect x="960.14" y="276" width="4.6" height="14.30" fill="#9333ea"/>
<line x1="968.06" y1="267.3" x2="968.06" y2="311.7" stroke="#9333ea" stroke-width="1.3"/>
<rect x="965.76" y="267.7" width="4.6" height="13.90" fill="#9333ea"/>
<line x1="973.68" y1="252.9" x2="973.68" y2="272.9" stroke="#facc15" stroke-width="1.3"/>
<rect x="971.38" y="267.3" width="4.6" height="1.90" fill="#facc15"/>
<line x1="979.30" y1="266.2" x2="979.30" y2="285.3" stroke="#facc15" stroke-width="1.3"/>
<rect x="977.00" y="266.8" width="4.6" height="17.20" fill="#facc15"/>
<line x1="984.92" y1="277" x2="984.92" y2="293.6" stroke="#facc15" stroke-width="1.3"/>
<rect x="982.62" y="284" width="4.6" height="3.10" fill="#facc15"/>
<line x1="990.55" y1="289.9" x2="990.55" y2="302.4" stroke="#facc15" stroke-width="1.3"/>
<rect x="988.25" y="290.3" width="4.6" height="8.50" fill="#facc15"/>
<line x1="996.17" y1="296.9" x2="996.17" y2="321.7" stroke="#facc15" stroke-width="1.3"/>
<rect x="993.87" y="297.3" width="4.6" height="15.70" fill="#facc15"/>
<line x1="1001.79" y1="301.3" x2="1001.79" y2="328.7" stroke="#facc15" stroke-width="1.3"/>
<rect x="999.49" y="311.1" width="4.6" height="5.00" fill="#facc15"/>
<line x1="1007.41" y1="274.2" x2="1007.41" y2="320.4" stroke="#9333ea" stroke-width="1.3"/>
<rect x="1005.11" y="286.6" width="4.6" height="33.20" fill="#9333ea"/>
<line x1="1013.03" y1="272.3" x2="1013.03" y2="288.4" stroke="#facc15" stroke-width="1.3"/>
<rect x="1010.73" y="284.7" width="4.6" height="3.00" fill="#facc15"/>
<line x1="1018.66" y1="281" x2="1018.66" y2="298.8" stroke="#facc15" stroke-width="1.3"/>
<rect x="1016.36" y="286.2" width="4.6" height="3.70" fill="#facc15"/>
<line x1="1024.28" y1="269.2" x2="1024.28" y2="302.4" stroke="#facc15" stroke-width="1.3"/>
<rect x="1021.98" y="286.2" width="4.6" height="15.70" fill="#facc15"/>
<line x1="1029.90" y1="277.9" x2="1029.90" y2="303.7" stroke="#9333ea" stroke-width="1.3"/>
<rect x="1027.60" y="290.3" width="4.6" height="11.60" fill="#9333ea"/>
<line x1="44" y1="290.6" x2="1226" y2="290.6" stroke="#9333ea" stroke-width="1" stroke-dasharray="2 1.77"/>
<line x1="44" y1="494.4" x2="1227" y2="494.4" stroke="#1f2233" stroke-width="1.5"/>
<line x1="1226.6" y1="46" x2="1226.6" y2="495" stroke="#1f2233" stroke-width="1.5"/>
<text x="1235" y="97.9" class="pl">0.55950</text>
<text x="1235" y="145.8" class="pl">0.55900</text>
<text x="1235" y="193.7" class="pl">0.55850</text>
<text x="1235" y="241.6" class="pl">0.55800</text>
<text x="1235" y="289.5" class="pl">0.55750</text>
<text x="1235" y="337.4" class="pl">0.55700</text>
<text x="1235" y="385.3" class="pl">0.55650</text>
<text x="1235" y="433.2" class="pl">0.55600</text>
<text x="1235" y="481.1" class="pl">0.55550</text>
<text x="85.4" y="511.2" class="tl" text-anchor="middle">22:30</text>
<text x="186.6" y="511.2" class="tl b" text-anchor="middle">12</text>
<text x="287.8" y="511.2" class="tl" text-anchor="middle">01:30</text>
<text x="389.1" y="511.2" class="tl" text-anchor="middle">03:00</text>
<text x="490.3" y="511.2" class="tl" text-anchor="middle">04:30</text>
<text x="591.5" y="511.2" class="tl" text-anchor="middle">06:00</text>
<text x="692.7" y="511.2" class="tl" text-anchor="middle">07:30</text>
<text x="793.9" y="511.2" class="tl" text-anchor="middle">09:00</text>
<text x="895.2" y="511.2" class="tl" text-anchor="middle">10:30</text>
<text x="996.4" y="511.2" class="tl" text-anchor="middle">12:00</text>
</svg>
<div class="abs" style="left:56px;top:59px;width:52px;height:24px;border:1px solid #e4e4e7;border-radius:5px;background:#fff"></div>
<div class="abs" style="left:1254px;top:488px;width:24px;height:24px;border:1px solid #e8e8ea;border-radius:4px;background:#fff"></div>
<svg width="11" height="11" style="left:1261.5px;top:495.2px" viewBox="0 0 12 12" fill="none" stroke="#111" stroke-width="1.2" stroke-linecap="round"><path d="M1.5 1.5l2.8 2.8M1.5 1.5h2.2M1.5 1.5v2.2M10.5 1.5l-2.8 2.8M10.5 1.5H8.3M10.5 1.5v2.2M1.5 10.5l2.8-2.8M1.5 10.5h2.2M1.5 10.5V8.3M10.5 10.5l-2.8-2.8M10.5 10.5H8.3M10.5 10.5V8.3"/></svg>
<!-- bottom panel -->
<div class="abs" style="left:0;top:565px;width:1295px;height:1px;background:#e4e4e7"></div>
<div class="abs" style="left:0;top:563px;width:82px;height:2px;background:#1f1f23"></div>
<svg width="10" height="6" style="left:1238.5px;top:544.5px" viewBox="0 0 10 6" fill="none" stroke="#5b6070" stroke-width="1.3" stroke-linecap="round" stroke-linejoin="round"><path d="M1 1l4 4 4-4"/></svg>
<svg width="14" height="14" style="left:1266.5px;top:540.5px" viewBox="0 0 14 14" fill="none" stroke="#5b6070" stroke-width="1.5" stroke-linecap="round" stroke-linejoin="round"><path d="M1.2 1.2l3.6 3.6M1.2 1.2h3M1.2 1.2v3M12.8 1.2l-3.6 3.6M12.8 1.2h-3M12.8 1.2v3M1.2 12.8l3.6-3.6M1.2 12.8h3M1.2 12.8v-3M12.8 12.8l-3.6-3.6M12.8 12.8h-3M12.8 12.8v-3"/></svg>
<!-- scroll track -->
<div class="abs" style="left:1275px;top:566px;width:19px;height:300px;background:#fafafa"></div>
<svg width="10" height="8" style="left:1279.5px;top:573.5px" viewBox="0 0 10 8" fill="#8a8a8a"><path d="M5 1L9.2 7H0.8z"/></svg>
<div class="abs" style="left:1279px;top:589px;width:11px;height:21px;background:#8a8a8a;border-radius:6px"></div>
<!-- account row -->
<div class="abs" style="left:0;top:619px;width:1275px;height:1px;background:#e4e4e7"></div>

<div class="abs" style="left:1189px;top:635px;width:71px;height:20px;background:#f0222f;border-radius:7px"></div>
<!-- table -->
<div class="abs" style="left:6px;top:670px;width:1254px;height:220px;border:1px solid #e4e4e7;border-radius:8px"></div>
<div class="abs" style="left:7px;top:708px;width:1252px;height:1px;background:#e4e4e7"></div>
<div class="abs" style="left:7px;top:758px;width:1252px;height:1px;background:#e4e4e7"></div>
<div class="abs" style="left:7px;top:808px;width:1252px;height:1px;background:#e4e4e7"></div>
<div class="abs" style="left:7px;top:858px;width:1252px;height:1px;background:#e4e4e7"></div>
<div class="abs" style="left:390px;top:723.3px;width:57px;height:20.3px;background:#18181b;border-radius:6px"></div>
<svg width="12" height="8" style="left:398px;top:729.5px" viewBox="0 0 12 8" fill="none" stroke="#fff" stroke-width="1" stroke-linecap="round" stroke-linejoin="round"><path d="M1 6.3l3-2.8 2 1.6 4.5-4.1M8.2 1h2.3v2.2"/></svg>
<div class="abs" style="left:390px;top:773.3px;width:57px;height:20.3px;background:#18181b;border-radius:6px"></div>
<svg width="12" height="8" style="left:398px;top:779.5px" viewBox="0 0 12 8" fill="none" stroke="#fff" stroke-width="1" stroke-linecap="round" stroke-linejoin="round"><path d="M1 6.3l3-2.8 2 1.6 4.5-4.1M8.2 1h2.3v2.2"/></svg>
<div class="abs" style="left:390px;top:823.3px;width:57px;height:20.3px;background:#18181b;border-radius:6px"></div>
<svg width="12" height="8" style="left:398px;top:829.5px" viewBox="0 0 12 8" fill="none" stroke="#fff" stroke-width="1" stroke-linecap="round" stroke-linejoin="round"><path d="M1 6.3l3-2.8 2 1.6 4.5-4.1M8.2 1h2.3v2.2"/></svg>
<!-- right panel -->
<div class="abs" style="left:1296px;top:80px;width:558px;height:1px;background:#e4e4e7"></div>
<svg width="14" height="14" style="left:1318px;top:53.5px" viewBox="0 0 14 14" fill="none" stroke="#222" stroke-width="1.4" stroke-linecap="round"><circle cx="6" cy="6" r="4.8"/><path d="M9.6 9.6l2.6 2.6"/></svg>
<svg width="12" height="12" style="left:1816.5px;top:54.5px" viewBox="0 0 12 12" fill="none" stroke="#111" stroke-width="1.3" stroke-linecap="round"><path d="M1.2 1.2l9.6 9.6M10.8 1.2l-9.6 9.6"/></svg>
<div id="rscroll" class="abs" style="left:1296px;top:81px;width:558px;height:721px;overflow:hidden">
  <div class="abs" style="left:12px;top:-40px;width:516px;height:53.5px;background:#f4f4f5;border-radius:10px"></div>
  <div class="abs" style="left:193px;top:51px;width:335px;height:56px;background:#18181b;border-radius:10px"></div>
  <div class="abs" style="left:12px;top:145px;width:516px;height:700px;background:#f4f4f5;border-radius:10px"></div>
  <div class="abs" style="left:28px;top:156.5px;width:484px;height:419px;background:#fff;border:1px solid #e4e4e7;border-radius:12px"></div>
  <div class="abs" style="left:28px;top:588px;width:484px;height:300px;background:#fff;border:1px solid #e4e4e7;border-radius:12px"></div>
  <div class="abs" style="left:29px;top:641px;width:482px;height:1px;background:#e4e4e7"></div>
  <div class="abs" style="left:270px;top:641px;width:241px;height:2px;background:#e4e4e7"></div>
  <div class="abs" style="left:539px;top:0;width:19px;height:721px;background:#fafafa"></div>
  <svg width="10" height="8" style="left:543.5px;top:8px" viewBox="0 0 10 8" fill="#8a8a8a"><path d="M5 1L9.2 7H0.8z"/></svg>
  <svg width="10" height="8" style="left:543.5px;top:705px" viewBox="0 0 10 8" fill="#8a8a8a"><path d="M5 7L9.2 1H0.8z"/></svg>
  <div class="abs" style="left:543px;top:565px;width:11px;height:67px;background:#6a6a6a;border-radius:6px"></div>
</div>
<!-- card chart -->
<svg width="1857" height="866" style="left:0;top:0" viewBox="0 0 1857 866">
<rect x="1406.8" y="356.3" width="373.2" height="217.7" fill="#bcc852"/>
<path d="M1406.8 356.3H1780V356.3H1527C1490 357 1450 364 1406.8 374.4Z" fill="#66bb6a"/>
<line x1="1406.8" y1="356.8" x2="1780" y2="356.8" stroke="#2ea83a" stroke-width="1.2"/>
<path d="M1406.8 374.4C1450 364 1490 357 1527 356.6" fill="none" stroke="#f2cf3a" stroke-width="1"/>
<line x1="1527" y1="356.3" x2="1780" y2="356.3" stroke="#f2cf3a" stroke-width="1"/>
<path d="M1406.8 550C1450 549.2 1500 548.6 1531 548.3H1780V574H1406.8Z" fill="#a5b749"/>
<path d="M1406.8 550C1450 549.2 1500 548.6 1531 548.3H1780" fill="none" stroke="#9eb044" stroke-width="0.8"/>
<g stroke="#a9b44e" stroke-width="1" stroke-dasharray="3 3" opacity="0.6">
<line x1="1531.4" y1="356.3" x2="1531.4" y2="574"/><line x1="1655.5" y1="356.3" x2="1655.5" y2="574"/>
<line x1="1406.8" y1="411" x2="1780" y2="411"/><line x1="1406.8" y1="465" x2="1780" y2="465"/><line x1="1406.8" y1="519.6" x2="1780" y2="519.6"/>
</g>
<line x1="1780" y1="356.3" x2="1780" y2="574" stroke="#c8c8d8" stroke-width="1" stroke-dasharray="3 3"/>
<g stroke="#999" stroke-width="1.2">
<line x1="1406.8" y1="356.3" x2="1406.8" y2="574.3"/>
<line x1="1406.8" y1="574.3" x2="1780" y2="574.3"/>
<line x1="1401" y1="356.3" x2="1406.8" y2="356.3"/><line x1="1401" y1="411" x2="1406.8" y2="411"/><line x1="1401" y1="465" x2="1406.8" y2="465"/><line x1="1401" y1="519.6" x2="1406.8" y2="519.6"/><line x1="1401" y1="574.3" x2="1406.8" y2="574.3"/>
<line x1="1406.8" y1="574.3" x2="1406.8" y2="579.5"/><line x1="1531.4" y1="574.3" x2="1531.4" y2="579.5"/><line x1="1655.5" y1="574.3" x2="1655.5" y2="579.5"/><line x1="1780" y1="574.3" x2="1780" y2="579.5"/>
</g>
<g font-family="Liberation Sans" font-size="11" fill="#666">
<text x="1399" y="364" text-anchor="end">2.4</text>
<text x="1399" y="414.7" text-anchor="end">2.1</text>
<text x="1399" y="468.7" text-anchor="end">1.8</text>
<text x="1399" y="523.3" text-anchor="end">1.5</text>
<text x="1399" y="578" text-anchor="end">1.2</text>
<text x="1406.8" y="590" text-anchor="middle">6 days ago</text>
<text x="1531.4" y="590" text-anchor="middle">1 day ago</text>
<text x="1655.5" y="590" text-anchor="middle">21 hours ago</text>
<text x="1773" y="590" text-anchor="middle">Now</text>
<text x="1593.5" y="615" text-anchor="middle">Date</text>
<text x="0" y="0" text-anchor="middle" transform="translate(1359,440) rotate(-90)">Price / CPI</text>
<g fill="#222" letter-spacing="-0.25">
<text x="1467.8" y="626">GBP/USD</text>
<text x="1543" y="626">US CPI (%)</text>
<text x="1623" y="626">UK CPI (%)</text></g>
</g>
<rect x="1454.6" y="618" width="8" height="8" rx="1.5" fill="#2f55a8"/>
<rect x="1529" y="618" width="8" height="8" rx="1.5" fill="#1a8a1a"/>
<rect x="1610" y="618" width="8" height="8" rx="1.5" fill="#f2cf3a"/>
</svg>
<div class="abs" style="left:1296px;top:802px;width:558px;height:1px;background:#e4e4e7"></div>
<div class="abs" style="left:1308px;top:815px;width:535px;height:80px;border:1px solid #e4e4e7;border-radius:12px"></div>
<!-- resize handles -->
<div class="abs" style="left:635px;top:523px;width:15px;height:11px;background:#e4e4e6;border-radius:0 0 2px 2px"></div>
<svg width="15" height="11" style="left:635px;top:523px" viewBox="0 0 15 11" fill="#111"><circle cx="4.6" cy="3.8" r="0.9"/><circle cx="7.5" cy="3.8" r="0.9"/><circle cx="10.4" cy="3.8" r="0.9"/><circle cx="4.6" cy="6.6" r="0.9"/><circle cx="7.5" cy="6.6" r="0.9"/><circle cx="10.4" cy="6.6" r="0.9"/></svg>
<div class="abs" style="left:1289px;top:477px;width:12px;height:15px;background:#e4e4e6"></div>
<svg width="12" height="15" style="left:1289px;top:477px" viewBox="0 0 12 15" fill="#111"><circle cx="4.4" cy="4.6" r="0.9"/><circle cx="7.4" cy="4.6" r="0.9"/><circle cx="4.4" cy="7.5" r="0.9"/><circle cx="7.4" cy="7.5" r="0.9"/><circle cx="4.4" cy="10.4" r="0.9"/><circle cx="7.4" cy="10.4" r="0.9"/></svg>

<div id="aud" class="t sb" style="left:45.70px;top:14.47px;font-size:13.5px;color:#111;font-family:'Liberation Sans',sans-serif;letter-spacing:-0.592px">AUD/CHF</div>
<div id="tfD" class="t" style="left:159.50px;top:14.90px;font-size:13px;color:#6b7280;font-family:'Liberation Sans',sans-serif;letter-spacing:0.000px">D</div>
<div id="tf4" class="t" style="left:184.30px;top:14.90px;font-size:13px;color:#6b7280;font-family:'Liberation Sans',sans-serif;letter-spacing:0.000px">4H</div>
<div id="tf1" class="t" style="left:216.30px;top:14.90px;font-size:13px;color:#6b7280;font-family:'Liberation Sans',sans-serif;letter-spacing:0.000px">1H</div>
<div id="tf5" class="t sb" style="left:246.30px;top:14.90px;font-size:13px;color:#111;font-family:'Liberation Sans',sans-serif;letter-spacing:0.270px">5m</div>
<div id="buy" class="t sb" style="left:451.20px;top:16.37px;font-size:11.5px;color:#fff;font-family:'Liberation Sans',sans-serif;letter-spacing:-0.783px">Buy</div>
<div id="buyp" class="t sb" style="left:481.10px;top:16.37px;font-size:11.5px;color:#fff;font-family:'Liberation Sans',sans-serif;letter-spacing:-0.179px">0.55739</div>
<div id="sell" class="t sb" style="left:547.50px;top:16.37px;font-size:11.5px;color:#fff;font-family:'Liberation Sans',sans-serif;letter-spacing:-0.440px">Sell</div>
<div id="sellp" class="t sb" style="left:576.30px;top:16.37px;font-size:11.5px;color:#fff;font-family:'Liberation Sans',sans-serif;letter-spacing:-0.262px">0.55755</div>
<div id="chart1" class="t sb2" style="left:64.50px;top:66.09px;font-size:11px;color:#5f6470;font-family:'Liberation Sans',sans-serif;letter-spacing:-0.192px">Chart 1</div>
<div id="tabPos" class="t sb" style="left:13.20px;top:541.86px;font-size:12.8px;color:#111;font-family:'Liberation Sans',sans-serif;letter-spacing:0.234px">Positions</div>
<div id="tabOrd" class="t sb2" style="left:97.40px;top:541.86px;font-size:12.8px;color:#5b6270;font-family:'Liberation Sans',sans-serif;letter-spacing:0.218px">Orders</div>
<div id="tabOT" class="t sb2" style="left:167.00px;top:541.86px;font-size:12.8px;color:#5b6270;font-family:'Liberation Sans',sans-serif;letter-spacing:0.089px">Open Trades</div>
<div id="tabJ" class="t sb2" style="left:271.00px;top:541.86px;font-size:12.8px;color:#5b6270;font-family:'Liberation Sans',sans-serif;letter-spacing:0.479px">Journal</div>
<div id="al0" class="t" style="left:2.70px;top:579.59px;font-size:11px;color:#6b7280;font-family:'Liberation Sans',sans-serif;letter-spacing:-0.088px">Account Balance</div>
<div id="av0" class="t sb" style="left:17.80px;top:595.33px;font-size:10.6px;color:#111;font-family:'Liberation Sans',sans-serif;letter-spacing:-0.214px">$66,151.28</div>
<div id="al1" class="t" style="left:267.50px;top:579.59px;font-size:11px;color:#6b7280;font-family:'Liberation Sans',sans-serif;letter-spacing:-0.294px">Equity</div>
<div id="av1" class="t sb" style="left:255.00px;top:595.33px;font-size:10.6px;color:#111;font-family:'Liberation Sans',sans-serif;letter-spacing:0.163px">$63,908.34</div>
<div id="al2" class="t" style="left:480.40px;top:579.59px;font-size:11px;color:#6b7280;font-family:'Liberation Sans',sans-serif;letter-spacing:-0.264px">Leverage</div>
<div id="av2" class="t sb" style="left:496.40px;top:595.33px;font-size:10.6px;color:#111;font-family:'Liberation Sans',sans-serif;letter-spacing:0.008px">50</div>
<div id="al3" class="t" style="left:695.50px;top:579.59px;font-size:11px;color:#6b7280;font-family:'Liberation Sans',sans-serif;letter-spacing:0.184px">Account Margin</div>
<div id="av3" class="t sb" style="left:713.20px;top:595.33px;font-size:10.6px;color:#111;font-family:'Liberation Sans',sans-serif;letter-spacing:0.050px">995.93%</div>
<div id="al4" class="t" style="left:944.40px;top:579.59px;font-size:11px;color:#6b7280;font-family:'Liberation Sans',sans-serif;letter-spacing:-0.069px">Available Funds</div>
<div id="av4" class="t sb" style="left:956.50px;top:595.33px;font-size:10.6px;color:#111;font-family:'Liberation Sans',sans-serif;letter-spacing:-0.125px">$57,491.36</div>
<div id="al5" class="t" style="left:1192.00px;top:579.59px;font-size:11px;color:#6b7280;font-family:'Liberation Sans',sans-serif;letter-spacing:0.135px">Orders Margin</div>
<div id="av5" class="t sb" style="left:1205.00px;top:595.33px;font-size:10.6px;color:#111;font-family:'Liberation Sans',sans-serif;letter-spacing:-0.030px">$6,416.98</div>
<div id="total" class="t sb" style="left:6.10px;top:639.63px;font-size:12.6px;color:#111;font-family:'Liberation Sans',sans-serif;letter-spacing:0.278px">Total: 193 positions</div>
<div id="badge" class="t sb" style="left:1198.00px;top:639.69px;font-size:11px;color:#fff;font-family:'Liberation Sans',sans-serif;letter-spacing:0.002px">-$2,244.49</div>
<div id="hID" class="t sb" style="left:14.00px;top:684.26px;font-size:12.8px;color:#111;font-family:'Liberation Sans',sans-serif;letter-spacing:0.645px">ID</div>
<div id="hSym" class="t sb" style="left:204.30px;top:684.26px;font-size:12.8px;color:#111;font-family:'Liberation Sans',sans-serif;letter-spacing:0.294px">Symbol</div>
<div id="hSide" class="t sb" style="left:390.00px;top:684.26px;font-size:12.8px;color:#111;font-family:'Liberation Sans',sans-serif;letter-spacing:-0.065px">Side</div>
<div id="hSize" class="t sb" style="left:653.60px;top:684.26px;font-size:12.8px;color:#111;font-family:'Liberation Sans',sans-serif;letter-spacing:-0.559px">Size</div>
<div id="hEntry" class="t sb" style="left:844.60px;top:684.26px;font-size:12.8px;color:#111;font-family:'Liberation Sans',sans-serif;letter-spacing:0.333px">Entry</div>
<div id="hCur" class="t sb" style="left:1031.60px;top:684.26px;font-size:12.8px;color:#111;font-family:'Liberation Sans',sans-serif;letter-spacing:0.197px">Current</div>
<div id="hPL" class="t sb" style="left:1227.80px;top:684.26px;font-size:12.8px;color:#111;font-family:'Liberation Sans',sans-serif;letter-spacing:-0.285px">P&amp;L</div>
<div id="rid0" class="t" style="left:15.00px;top:729.95px;font-size:10px;color:#111;font-family:'Liberation Mono',monospace;letter-spacing:0.099px">359639368</div>
<div id="rsym0" class="t sb2" style="left:203.30px;top:728.00px;font-size:12.4px;color:#111;font-family:'Liberation Sans',sans-serif;letter-spacing:-0.475px">EURUSD</div>
<div id="rbuy0" class="t sb" style="left:417.00px;top:730.10px;font-size:10.4px;color:#fff;font-family:'Liberation Sans',sans-serif;letter-spacing:-0.367px">BUY</div>
<div id="rsz0" class="t" style="left:653.10px;top:727.73px;font-size:12.6px;color:#111;font-family:'Liberation Sans',sans-serif;letter-spacing:-0.702px">0.01</div>
<div id="ren0" class="t" style="left:831.80px;top:727.73px;font-size:12.6px;color:#111;font-family:'Liberation Sans',sans-serif;letter-spacing:-0.153px">1.15980</div>
<div id="rcur0" class="t" style="left:1031.60px;top:727.73px;font-size:12.6px;color:#111;font-family:'Liberation Sans',sans-serif;letter-spacing:-0.270px">1.15535</div>
<div id="rpl0" class="t" style="left:1216.20px;top:720.73px;font-size:12.6px;color:#ef4444;font-family:'Liberation Sans',sans-serif;letter-spacing:-0.121px">-$4.45</div>
<div id="rpc0" class="t" style="left:1218.10px;top:739.03px;font-size:10.6px;color:#f87171;font-family:'Liberation Sans',sans-serif;letter-spacing:-0.189px">-0.38%</div>
<div id="rid1" class="t" style="left:15.00px;top:779.95px;font-size:10px;color:#111;font-family:'Liberation Mono',monospace;letter-spacing:0.099px">359639374</div>
<div id="rsym1" class="t sb2" style="left:203.30px;top:778.00px;font-size:12.4px;color:#111;font-family:'Liberation Sans',sans-serif;letter-spacing:-0.475px">EURUSD</div>
<div id="rbuy1" class="t sb" style="left:417.00px;top:780.10px;font-size:10.4px;color:#fff;font-family:'Liberation Sans',sans-serif;letter-spacing:-0.367px">BUY</div>
<div id="rsz1" class="t" style="left:653.10px;top:777.73px;font-size:12.6px;color:#111;font-family:'Liberation Sans',sans-serif;letter-spacing:-0.702px">0.01</div>
<div id="ren1" class="t" style="left:831.80px;top:777.73px;font-size:12.6px;color:#111;font-family:'Liberation Sans',sans-serif;letter-spacing:-0.153px">1.15975</div>
<div id="rcur1" class="t" style="left:1031.60px;top:777.73px;font-size:12.6px;color:#111;font-family:'Liberation Sans',sans-serif;letter-spacing:-0.270px">1.15535</div>
<div id="rpl1" class="t" style="left:1216.20px;top:770.73px;font-size:12.6px;color:#ef4444;font-family:'Liberation Sans',sans-serif;letter-spacing:-0.121px">-$4.40</div>
<div id="rpc1" class="t" style="left:1218.10px;top:789.03px;font-size:10.6px;color:#f87171;font-family:'Liberation Sans',sans-serif;letter-spacing:-0.189px">-0.38%</div>
<div id="rid2" class="t" style="left:15.00px;top:829.95px;font-size:10px;color:#111;font-family:'Liberation Mono',monospace;letter-spacing:0.099px">359639375</div>
<div id="rsym2" class="t sb2" style="left:203.30px;top:828.00px;font-size:12.4px;color:#111;font-family:'Liberation Sans',sans-serif;letter-spacing:-0.475px">EURUSD</div>
<div id="rbuy2" class="t sb" style="left:417.00px;top:830.10px;font-size:10.4px;color:#fff;font-family:'Liberation Sans',sans-serif;letter-spacing:-0.367px">BUY</div>
<div id="rsz2" class="t" style="left:653.10px;top:827.73px;font-size:12.6px;color:#111;font-family:'Liberation Sans',sans-serif;letter-spacing:-0.702px">0.01</div>
<div id="ren2" class="t" style="left:831.80px;top:827.73px;font-size:12.6px;color:#111;font-family:'Liberation Sans',sans-serif;letter-spacing:-0.153px">1.15975</div>
<div id="rcur2" class="t" style="left:1031.60px;top:827.73px;font-size:12.6px;color:#111;font-family:'Liberation Sans',sans-serif;letter-spacing:-0.270px">1.15535</div>
<div id="rpl2" class="t" style="left:1216.20px;top:820.73px;font-size:12.6px;color:#ef4444;font-family:'Liberation Sans',sans-serif;letter-spacing:-0.121px">-$4.40</div>
<div id="rpc2" class="t" style="left:1218.10px;top:839.03px;font-size:10.6px;color:#f87171;font-family:'Liberation Sans',sans-serif;letter-spacing:-0.189px">-0.38%</div>
<div id="ragent" class="t sb" style="left:1344.70px;top:53.57px;font-size:13.5px;color:#111;font-family:'Liberation Sans',sans-serif;letter-spacing:-0.297px">Research Agent</div>
<div id="bubble" class="t" style="left:1502.70px;top:145.60px;font-size:13px;color:#fff;font-family:'Liberation Sans',sans-serif;letter-spacing:-0.052px">Research on inflation data and its effect on GBP/USD</div>
<div id="title" class="t sb" style="left:1346.50px;top:266.48px;font-size:16.8px;color:#111;font-family:'Liberation Sans',sans-serif;letter-spacing:-0.002px">GBP/USD Response to Inflation Data (Recent News)</div>
<div id="sub1" class="t" style="left:1346.50px;top:294.63px;font-size:12.6px;color:#6b7280;font-family:'Liberation Sans',sans-serif;letter-spacing:0.136px">Trend visualization of GBP/USD in relation to recent US and UK inflation</div>
<div id="sub2" class="t" style="left:1346.50px;top:313.53px;font-size:12.6px;color:#6b7280;font-family:'Liberation Sans',sans-serif;letter-spacing:0.000px">releases.</div>
<div id="ks" class="t sb" style="left:1346.50px;top:689.00px;font-size:13px;color:#111;font-family:'Liberation Sans',sans-serif;letter-spacing:-0.025px">GBP/USD &amp; Inflation Key Stats</div>
<div id="lvl" class="t" style="left:1346.20px;top:770.59px;font-size:11px;color:#6b7280;font-family:'Liberation Sans',sans-serif;letter-spacing:-0.175px">GBP/USD LEVEL</div>
<div id="uscpi" class="t" style="left:1588.00px;top:782.69px;font-size:11px;color:#6b7280;font-family:'Liberation Sans',sans-serif;letter-spacing:0.234px">US CPI (INFLATION)</div>
<div class="abs" style="left:1296px;top:700px;width:530px;height:102px;overflow:hidden"><div style="position:absolute;left:-1296px;top:-700px;width:1857px;height:866px"><div id="v124" class="t lt" style="left:1347.00px;top:791.49px;font-size:26px;color:#222;font-family:'Liberation Sans',sans-serif;letter-spacing:-0.515px">1.24</div></div></div>
<div id="ask" class="t" style="left:1319.50px;top:830.00px;font-size:13px;color:#9ca3af;font-family:'Liberation Sans',sans-serif;letter-spacing:-0.042px">...Ask me anything</div>
</body></html>
